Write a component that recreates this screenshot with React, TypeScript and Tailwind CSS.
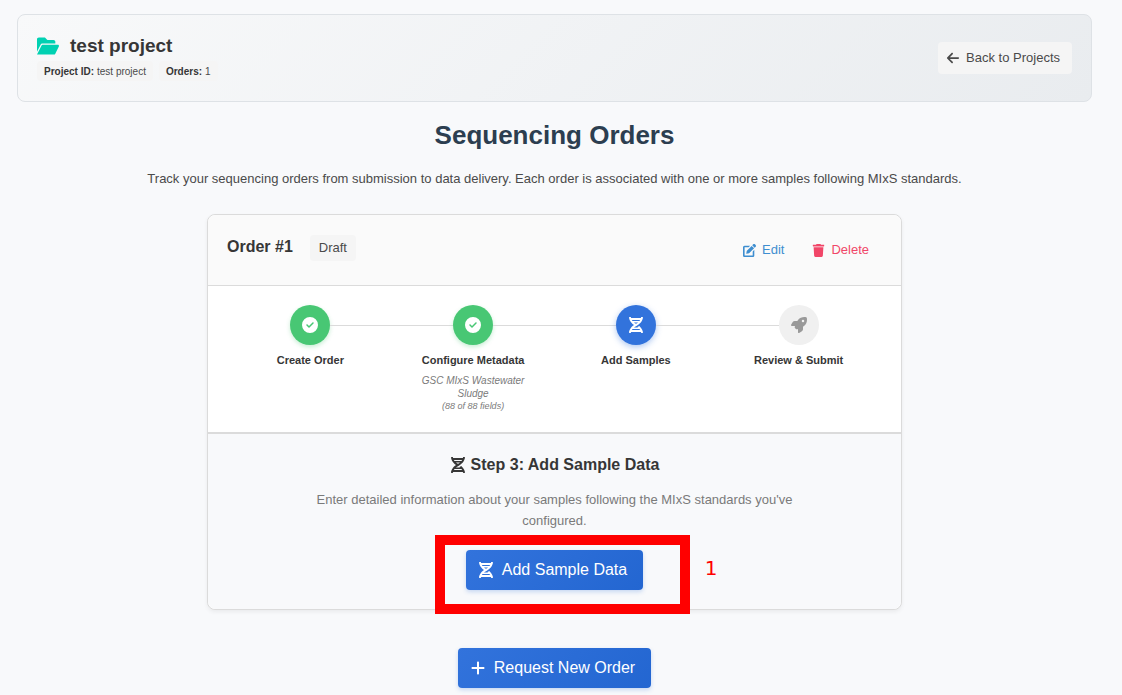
import type { ReactNode } from "react";
import { FaArrowLeft, FaCircleCheck, FaPlus, FaRocket } from "react-icons/fa6";

type StepState = "done" | "active" | "pending";

interface Step {
  label: string;
  state: StepState;
  icon: ReactNode;
  detail?: string;
  note?: string;
}

interface IconProps {
  className?: string;
}

function DnaIcon({ className = "size-[1em]" }: IconProps) {
  return (
    <svg viewBox="0 0 448 512" fill="currentColor" className={className} aria-hidden="true">
      <path d="M.1193 494.1c-1.125 9.5 6.312 17.87 15.94 17.87l32.06 .0635c8.125 0 15.21-5.833 16.21-13.83c.7501-4.875 1.869-11.17 3.494-18.17h312c1.625 6.875 2.904 13.31 3.529 18.18c1.125 7.1 7.84 13.94 15.97 13.82l32.46-.0625c9.625 0 17.12-8.374 15.99-17.87c-4.625-37.87-25.75-128.1-119.1-207.7c-17.5 12.37-36.98 24.37-58.48 35.49c6.25 4.625 11.56 9.405 17.06 14.15H159.7c21.25-18.12 47.03-35.63 78.65-51.38c172.1-85.63 203.7-218.6 209.5-266.7c1.125-9.5-6.297-17.88-15.92-17.88L399.6 .001c-8.125 0-14.84 5.832-15.96 13.83c-.7501 4.875-1.869 11.17-3.369 18.17H67.74C66.24 25 65.08 18.81 64.33 13.81C63.21 5.813 56.48-.124 48.36 .001L16.1 .1338c-9.625 0-17.09 8.354-15.96 17.85c5.125 42.87 31.29 153.8 159.9 238.1C31.55 340.3 5.245 451.2 .1193 494.1zM223.9 219.7C198.8 205.9 177.6 191.3 159.7 176h128.5C270.4 191.3 249 206.1 223.9 219.7zM355.1 96c-5.875 10.37-12.88 21.12-21 32H113.1c-8.25-10.87-15.3-21.63-21.05-32L355.1 96zM93 415.1c5.875-10.37 12.74-21.13 20.87-32h219.4c8.25 10.87 15.33 21.63 21.2 32H93z" />
    </svg>
  );
}

function FolderOpenIcon({ className }: IconProps) {
  return (
    <svg viewBox="0 0 576 512" fill="currentColor" className={className} aria-hidden="true">
      <path d="M147.8 192H480V144C480 117.5 458.5 96 432 96h-160l-64-64h-160C21.49 32 0 53.49 0 80v328.4l90.54-181.1C101.4 205.6 123.4 192 147.8 192zM543.1 224H147.8C135.7 224 124.6 230.8 119.2 241.7L0 480h447.1c12.12 0 23.2-6.852 28.62-17.69l96-192C583.2 249 567.7 224 543.1 224z" />
    </svg>
  );
}

function EditIcon({ className }: IconProps) {
  return (
    <svg viewBox="0 0 512 512" fill="currentColor" className={className} aria-hidden="true">
      <path d="M383.1 448H63.1V128h156.1l64-64H63.1C28.65 64 0 92.65 0 128v320c0 35.35 28.65 64 63.1 64h319.1c35.34 0 63.1-28.65 63.1-64l-.0039-220.1l-63.1 63.99V448zM497.9 42.19l-28.13-28.14c-18.75-18.75-49.14-18.75-67.88 0l-38.62 38.63l96.01 96.01l38.62-38.63C516.7 91.33 516.7 60.94 497.9 42.19zM147.3 274.4l-19.04 95.22c-1.678 8.396 5.725 15.8 14.12 14.12l95.23-19.04c4.646-.9297 8.912-3.213 12.26-6.562l186.8-186.8l-96.01-96.01L153.8 262.2C150.4 265.5 148.2 269.8 147.3 274.4z" />
    </svg>
  );
}

function TrashIcon({ className }: IconProps) {
  return (
    <svg viewBox="0 0 448 512" fill="currentColor" className={className} aria-hidden="true">
      <path d="M53.21 467c1.562 24.84 23.02 45 47.9 45h245.8c24.88 0 46.33-20.16 47.9-45L416 128H32L53.21 467zM432 32H320l-11.58-23.16c-2.709-5.42-8.25-8.844-14.31-8.844H153.9c-6.061 0-11.6 3.424-14.31 8.844L128 32H16c-8.836 0-16 7.162-16 16V80c0 8.836 7.164 16 16 16h416c8.838 0 16-7.164 16-16V48C448 39.16 440.8 32 432 32z" />
    </svg>
  );
}

const steps: Step[] = [
  { label: "Create Order", state: "done", icon: <FaCircleCheck /> },
  {
    label: "Configure Metadata",
    state: "done",
    icon: <FaCircleCheck />,
    detail: "GSC MIxS Wastewater Sludge",
    note: "(88 of 88 fields)",
  },
  { label: "Add Samples", state: "active", icon: <DnaIcon /> },
  { label: "Review & Submit", state: "pending", icon: <FaRocket /> },
];

const circleStyles: Record<StepState, string> = {
  done: "bg-[#48c774] text-white shadow-[0_2px_4px_rgba(72,199,116,0.3)]",
  active: "bg-[#3273dc] text-white shadow-[0_2px_6px_rgba(50,115,220,0.4)]",
  pending: "bg-[#f0f0f0] text-[#999999]",
};

function Tag({ name, value }: { name: string; value: string }) {
  return (
    <span className="flex h-5 items-center gap-[3px] rounded bg-[#f5f5f5] px-[7px] text-[10px] text-[#4a4a4a]">
      <strong className="text-[#363636]">{name}</strong>
      {value}
    </span>
  );
}

function ProjectHeader() {
  return (
    <header className="flex items-center justify-between rounded-lg border border-[#dee2e6] bg-linear-135 from-[#f8f9fa] to-[#e9ecef] px-[19px] py-4">
      <div className="pb-1">
        <div className="flex items-center gap-[11px]">
          <FolderOpenIcon className="size-[22px] text-[#00d1b2]" />
          <h2 className="text-[19px] leading-[30px] font-bold text-[#363636]">test project</h2>
        </div>
        <div className="flex gap-1.5">
          <Tag name="Project ID:" value="test project" />
          <Tag name="Orders:" value="1" />
        </div>
      </div>
      <a
        href="#projects"
        className="flex h-8 items-center gap-1.5 rounded bg-[#f5f5f5] pr-3 pl-2 text-[13px] text-[#4a4a4a]"
      >
        <FaArrowLeft className="size-[14px]" />
        Back to Projects
      </a>
    </header>
  );
}

function StepItem({ step, first, last }: { step: Step; first: boolean; last: boolean }) {
  return (
    <li className="flex flex-col items-center text-center">
      <div className="flex w-full items-center">
        <span className={first ? "flex-1" : "h-px flex-1 bg-[#dbdbdb]"} />
        <span
          className={`flex size-10 items-center justify-center rounded-full text-[16px] ${circleStyles[step.state]}`}
        >
          {step.icon}
        </span>
        <span className={last ? "flex-1" : "h-px flex-1 bg-[#dbdbdb]"} />
      </div>
      <p className="mt-2 text-[11px] leading-[14px] font-bold text-[#363636]">{step.label}</p>
      {step.detail && (
        <p className="mt-[7px] w-[110px] text-[10px] leading-[13px] text-[#7a7a7a] italic">{step.detail}</p>
      )}
      {step.note && <p className="text-[9px] leading-[12px] text-[#7a7a7a] italic">{step.note}</p>}
    </li>
  );
}

function PrimaryButton({ icon, children }: { icon: ReactNode; children: ReactNode }) {
  return (
    <button
      type="button"
      className="flex h-10 items-center gap-2 rounded bg-linear-135 from-[#3273dc] to-[#2366d1] pr-4 pl-3 text-[16px] text-white shadow-[0_2px_4px_rgba(50,115,220,0.25)]"
    >
      {icon}
      {children}
    </button>
  );
}

function OrderCard() {
  return (
    <article className="mx-auto mt-6 max-w-[695px] rounded-lg border border-[#dbdbdb] bg-white shadow-[0_2px_4px_rgba(0,0,0,0.06)]">
      <div className="flex items-center justify-between rounded-t-lg border-b border-[#dbdbdb] bg-[#fafafa] py-5 pr-5 pl-[19px]">
        <div className="flex items-start gap-[17px] pb-1">
          <h3 className="text-[16px] leading-6 font-bold text-[#363636]">Order #1</h3>
          <span className="flex h-[26px] items-center rounded bg-[#f5f5f5] px-[9px] text-[13px] text-[#4a4a4a]">
            Draft
          </span>
        </div>
        <div className="flex gap-1 text-[13px]">
          <button type="button" className="flex items-center gap-1.5 px-3 py-1 text-[#3e8ed0]">
            <EditIcon className="size-[13px]" />
            Edit
          </button>
          <button type="button" className="flex items-center gap-1.5 px-3 py-1 text-[#f14668]">
            <TrashIcon className="size-[13px]" />
            Delete
          </button>
        </div>
      </div>

      <ol className="grid grid-cols-4 px-[21px] pt-[19px] pb-5">
        {steps.map((step, i) => (
          <StepItem key={step.label} step={step} first={i === 0} last={i === steps.length - 1} />
        ))}
      </ol>

      <section className="flex flex-col items-center rounded-b-lg border-t-2 border-[#dbdbdb] bg-[#f8f9fb] px-5 py-[19px]">
        <h4 className="flex items-center gap-[5px] text-[16px] leading-6 font-bold text-[#363636]">
          <DnaIcon />
          Step 3: Add Sample Data
        </h4>
        <p className="mt-3 max-w-[500px] text-center text-[13px] leading-[21px] text-[#7a7a7a]">
          Enter detailed information about your samples following the MIxS standards you've configured.
        </p>
        <div className="relative mt-[19px]">
          <PrimaryButton icon={<DnaIcon />}>Add Sample Data</PrimaryButton>
          <div className="pointer-events-none absolute -top-[15px] -left-[31px] h-[79px] w-[255px] border-10 border-[#ff0000]" />
          <span className="absolute top-[6px] left-[239px] font-['DejaVu_Sans',sans-serif] text-[20px] leading-6 text-[#ff0000]">
            1
          </span>
        </div>
      </section>
    </article>
  );
}

export default function App() {
  return (
    <div className="min-h-screen bg-[#f8f9fb] pt-3.5 pr-[30px] pb-[7px] pl-[17px] font-['Liberation_Sans',Arial,sans-serif]">
      <ProjectHeader />
      <main>
        <h1 className="mt-4 text-center text-[26px] leading-[34px] font-bold text-[#2c3e50]">
          Sequencing Orders
        </h1>
        <p className="mt-4 text-center text-[13px] leading-[22px] text-[#4a4a4a]">
          Track your sequencing orders from submission to data delivery. Each order is associated with one or
          more samples following MIxS standards.
        </p>
        <OrderCard />
        <div className="mt-[38px] flex justify-center">
          <PrimaryButton icon={<FaPlus />}>Request New Order</PrimaryButton>
        </div>
      </main>
    </div>
  );
}
